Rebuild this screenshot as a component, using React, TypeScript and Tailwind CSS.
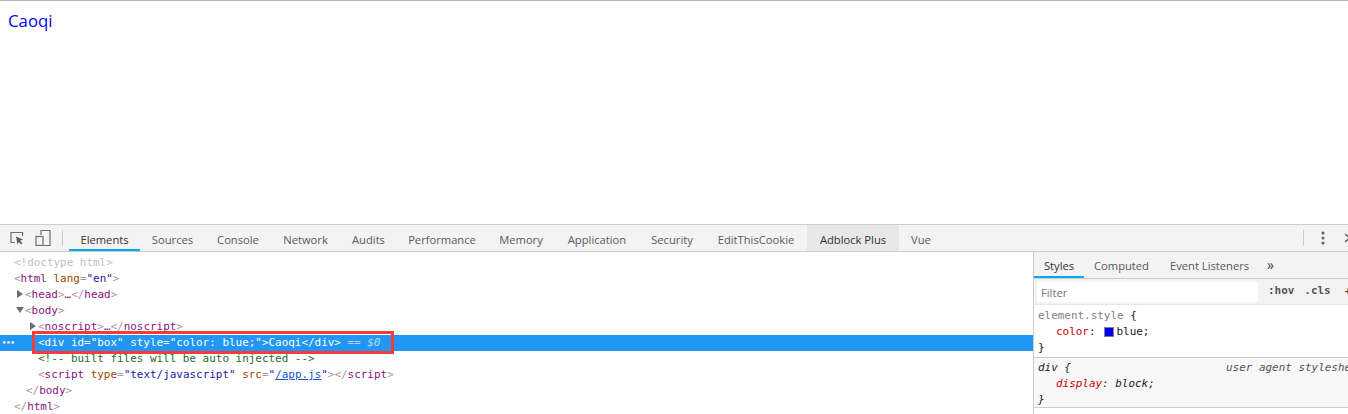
import React from 'react';

const ui = "font-['Open_Sans','Noto_Sans',sans-serif]";
const mono = "font-['DejaVu_Sans_Mono','Liberation_Mono',monospace] text-[10.95px]";

const tabs = [
  { label: 'Elements', w: 'w-[71px]', cls: 'text-[#333] border-[#03a9f4]' },
  { label: 'Sources', w: 'w-[65px]', cls: 'border-transparent' },
  { label: 'Console', w: 'w-[66px]', cls: 'border-transparent' },
  { label: 'Network', w: 'w-[69px]', cls: 'border-transparent' },
  { label: 'Audits', w: 'w-[57px]', cls: 'border-transparent' },
  { label: 'Performance', w: 'w-[90px]', cls: 'border-transparent' },
  { label: 'Memory', w: 'w-[68px]', cls: 'border-transparent' },
  { label: 'Application', w: 'w-[84px]', cls: 'border-transparent' },
  { label: 'Security', w: 'w-[66px]', cls: 'border-transparent' },
  { label: 'EditThisCookie', w: 'w-[102px]', cls: 'border-transparent' },
  { label: 'Adblock Plus', w: 'w-[92px]', cls: 'bg-[#e8e8e8] text-[#333] border-transparent' },
  { label: 'Vue', w: 'w-[44px]', cls: 'border-transparent' },
];

const Tag: React.FC<{ children: React.ReactNode }> = ({ children }) => <span className="text-[#881280]">{children}</span>;
const B: React.FC<{ children: React.ReactNode }> = ({ children }) => <span className="text-[#a894a8]">{children}</span>;
const Attr: React.FC<{ children: React.ReactNode }> = ({ children }) => <span className="text-[#994500]">{children}</span>;
const Val: React.FC<{ children: React.ReactNode }> = ({ children }) => <span className="text-[#1a1aa6]">{children}</span>;

const Row: React.FC<{ className: string; children: React.ReactNode }> = ({ className, children }) => (
  <div className={`relative h-4 leading-4 whitespace-nowrap ${className}`}>{children}</div>
);

const ArrowRight: React.FC = () => <span className="inline-block mr-[2px] w-0 h-0 border-y-[4px] border-y-transparent border-l-[6px] border-l-[#6e6e6e]" />;
const ArrowDown: React.FC = () => <span className="inline-block mr-[1px] mb-[1px] w-0 h-0 border-x-[4px] border-x-transparent border-t-[6px] border-t-[#6e6e6e]" />;

export default function App() {
  return (
    <div className="h-[414px] w-[1348px] overflow-hidden flex flex-col bg-white relative">
      <div className="h-[224px] border-t border-[#b5b5b5] pl-2 pt-[9px] shrink-0">
        <div className={`${ui} text-[16.8px] leading-[22px] text-[#0000ff]`}>Caoqi</div>
      </div>

      {/* toolbar */}
      <div className={`${ui} h-[28px] shrink-0 bg-[#f3f3f3] border-y border-[#cccccc] flex items-stretch text-[11.2px] text-[#5a5a5a]`}>
        <div className="w-[69px] shrink-0 flex items-center relative">
          <svg width="16" height="16" viewBox="0 0 16 16" className="ml-[9px]" fill="none">
            <path d="M6 12.5H2V2.5H13.5V6" stroke="#6e6e6e" strokeWidth="1.2" />
            <path d="M7 6.5l7 3-3 1.2 2.4 2.4-1.3 1.3-2.4-2.4-1.2 2.8z" fill="#5f5f5f" />
          </svg>
          <svg width="16" height="16" viewBox="0 0 16 16" className="ml-[10px]" fill="none">
            <path d="M6 5V0.5h9v15H8" stroke="#6e6e6e" strokeWidth="1.2" />
            <rect x="1" y="6.5" width="7" height="9" stroke="#6e6e6e" strokeWidth="1.2" />
          </svg>
          <div className="w-px h-4 bg-[#cccccc] ml-[11px]" />
        </div>
        {tabs.map(t => (
          <div key={t.label} className={`${t.w} shrink-0 flex items-center justify-center border-b-2 pt-[6px] ${t.cls}`}>{t.label}</div>
        ))}
        <div className="flex-1 flex items-center justify-end overflow-hidden">
          <div className="w-px h-4 bg-[#cccccc] mr-[17px]" />
          <svg width="4" height="14" viewBox="0 0 4 14" className="mr-[20px] shrink-0">
            <circle cx="2" cy="2" r="1.5" fill="#5f5f5f" />
            <circle cx="2" cy="7" r="1.5" fill="#5f5f5f" />
            <circle cx="2" cy="12" r="1.5" fill="#5f5f5f" />
          </svg>
          <svg width="3" height="10" viewBox="0 0 3 10" className="shrink-0">
            <path d="M0 1l5 4-5 4" stroke="#5f5f5f" strokeWidth="1.6" fill="none" />
          </svg>
        </div>
      </div>

      <div className="flex-1 flex min-h-0">
        {/* elements tree */}
        <div className={`${mono} w-[1033px] shrink-0 pt-[3px] relative`}>
          <Row className="pl-[14px] text-[#c0c0c0]">{'<!doctype html>'}</Row>
          <Row className="pl-[14px]"><B>{'<'}</B><Tag>html</Tag> <Attr>lang</Attr><B>=</B><Val>"en"</Val><B>{'>'}</B></Row>
          <Row className="pl-[17px]"><ArrowRight /><B>{'<'}</B><Tag>head</Tag><B>{'>'}</B><Tag>…</Tag><B>{'</'}</B><Tag>head</Tag><B>{'>'}</B></Row>
          <Row className="pl-[16px]"><ArrowDown /><B>{'<'}</B><Tag>body</Tag><B>{'>'}</B></Row>
          <Row className="pl-[30px]"><ArrowRight /><B>{'<'}</B><Tag>noscript</Tag><B>{'>'}</B><Tag>…</Tag><B>{'</'}</B><Tag>noscript</Tag><B>{'>'}</B></Row>
          <Row className="pl-[38px] bg-[#2196f3] text-white">
            <span className="absolute left-[2px] top-0 text-[7px] font-bold">•••</span>
            {'<div id="box" style="color: blue;">Caoqi</div> '}
            <span className="text-[#b5d8fb] italic">{'== $0'}</span>
            <div className="absolute left-[32px] top-[-4px] w-[362px] h-[23px] border-[3px] border-[#f63b3b]" />
          </Row>
          <Row className="pl-[38px] text-[#236e25]">{'<!-- built files will be auto injected -->'}</Row>
          <Row className="pl-[38px]">
            <B>{'<'}</B><Tag>script</Tag> <Attr>type</Attr><B>=</B><Val>"text/javascript"</Val> <Attr>src</Attr><B>=</B><Val>"</Val>
            <span className="text-[#1155cc] underline">/app.js</span><Val>"</Val><B>{'></'}</B><Tag>script</Tag><B>{'>'}</B>
          </Row>
          <Row className="pl-[26px]"><B>{'</'}</B><Tag>body</Tag><B>{'>'}</B></Row>
          <Row className="pl-[14px]"><B>{'</'}</B><Tag>html</Tag><B>{'>'}</B></Row>
        </div>

        {/* styles pane */}
        <div className="flex-1 min-w-0 border-l border-[#cccccc] flex flex-col overflow-hidden">
          <div className={`${ui} h-[27px] shrink-0 bg-[#f3f3f3] border-b border-[#cccccc] flex items-stretch text-[11.2px] text-[#5a5a5a]`}>
            <div className="w-[50px] flex items-center justify-center border-b-2 border-[#03a9f4] text-[#333] pt-[4px]">Styles</div>
            <div className="w-[76px] pl-[10px] flex items-center pt-[2px]">Computed</div>
            <div className="w-[97px] flex items-center pl-[10px] pt-[2px] whitespace-nowrap">Event Listeners</div>
            <div className="flex items-center text-[14px] text-[#444] pl-[10px] pb-[2px]">»</div>
          </div>
          <div className="h-[26px] shrink-0 bg-[#f3f3f3] flex items-center pl-[3px] pt-[3px] pb-[3px] border-b border-[#e6e6e6] overflow-hidden">
            <div className={`${ui} w-[221px] h-[20px] bg-white text-[11.2px] leading-[22px] pl-[4px] text-[#757575] shrink-0`}>Filter</div>
            <span className={`${mono} font-bold text-[#555] ml-[10px]`}>:hov</span>
            <span className={`${mono} font-bold text-[#555] ml-[10px]`}>.cls</span>
            <span className={`${mono} font-bold text-[#555] ml-[14px]`}>+</span>
          </div>
          <div className={`${mono} h-[53px] shrink-0 pl-[4px] pt-[3px] border-b border-[#cccccc] text-[#222]`}>
            <div className="h-4 leading-4"><span className="text-[#808080]">element.style</span> {'{'}</div>
            <div className="h-4 leading-4 pl-[18px] flex items-center">
              <span className="text-[#c80000]">color</span><span>:</span>
              <span className="inline-block w-[10px] h-[10px] bg-[#0000ff] border border-[#808080] ml-[8px] mr-[3px]" />
              <span>blue;</span>
            </div>
            <div className="h-[14px] leading-4">{'}'}</div>
          </div>
          <div className={`${mono} h-[50px] shrink-0 pl-[4px] pt-[2px] bg-[#f8f8f8] border-b border-[#cccccc] text-[#222] italic whitespace-nowrap`}>
            <div className="h-4 leading-4 flex">
              <span className="w-[188px] shrink-0">{'div {'}</span>
              <span className="shrink-0 text-[#555]">user agent stylesheet</span>
            </div>
            <div className="h-4 leading-4 pl-[18px]"><span className="text-[#c80000]">display</span>: block;</div>
            <div className="h-[15px] leading-4">{'}'}</div>
          </div>
        </div>
      </div>
    </div>
  );
}
